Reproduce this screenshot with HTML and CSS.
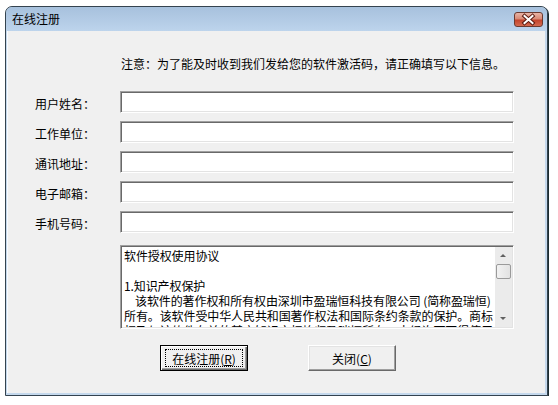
FILE: index.html
```html
<!DOCTYPE html>
<html lang="zh-CN">
<head>
<meta charset="utf-8">
<title>在线注册</title>
<link rel="stylesheet" href="styles.css">
</head>
<body>
<div class="window">
  <div class="titlebar">
    <span class="title">在线注册</span>
    <div class="close-btn">
      <svg width="29" height="15" viewBox="0 0 29 15">
        <path d="M10.5 4 L18.5 11 M18.5 4 L10.5 11" stroke="#5a1a10" stroke-width="4" stroke-linecap="square"/>
        <path d="M10.5 4 L18.5 11 M18.5 4 L10.5 11" stroke="#ffffff" stroke-width="2" stroke-linecap="square"/>
      </svg>
    </div>
  </div>
  <div class="client">
    <p class="notice">注意：为了能及时收到我们发给您的软件激活码，请正确填写以下信息。</p>
    <div class="form">
      <label class="label">用户姓名：</label><div class="field"></div>
      <label class="label">工作单位：</label><div class="field"></div>
      <label class="label">通讯地址：</label><div class="field"></div>
      <label class="label">电子邮箱：</label><div class="field"></div>
      <label class="label">手机号码：</label><div class="field"></div>
    </div>
    <div class="agreement">
      <div class="agreement-text">
        <div class="line">软件授权使用协议</div>
        <div class="line">&nbsp;</div>
        <div class="line">1.知识产权保护</div>
        <div class="line indent">该软件的著作权和所有权由深圳市盈瑞恒科技有限公司 (简称盈瑞恒)</div>
        <div class="line">所有。该软件受中华人民共和国著作权法和国际条约条款的保护。商标</div>
        <div class="line">权及与该软件有关的其它知识产权均归盈瑞恒所有，未经许可不得使用。</div>
      </div>
      <div class="scrollbar">
        <div class="arrow arrow-up"></div>
        <div class="thumb"></div>
        <div class="track"></div>
        <div class="arrow arrow-down"></div>
      </div>
    </div>
    <div class="buttons">
      <button class="btn btn-default"><span class="focus">在线注册(<u>R</u>)</span></button>
      <button class="btn">关闭(<u>C</u>)</button>
    </div>
  </div>
</div>
</body>
</html>
```
FILE: styles.css
```css
* { box-sizing: border-box; }

body {
  margin: 0;
  background: #ffffff;
  font-family: "Noto Sans CJK SC", "Noto Sans", sans-serif;
  font-size: 12px;
  color: #000;
}

.window {
  margin: 6px 0 0 5px;
  width: 543px;
  height: 390px;
  border: 1px solid #34434f;
  border-radius: 7px 7px 0 0;
  box-shadow: 1px 1px 0 #1c2c30;
  background: #c4d8ec;
  display: flex;
  flex-direction: column;
  padding: 0 2px 2px 1px;
  overflow: hidden;
}

.titlebar {
  height: 24px;
  margin: 0 -2px 0 -1px;
  padding: 0 4px 0 6px;
  background: linear-gradient(#a7c1dd, #b4cce6 60%, #bdd4ec);
  border-radius: 6px 6px 0 0;
  display: flex;
  align-items: flex-start;
  justify-content: space-between;
}

.title {
  line-height: 24px;
  font-size: 12px;
  color: #000;
}

.close-btn {
  margin-top: 5px;
  width: 29px;
  height: 15px;
  border: 1px solid #6b3a30;
  border-radius: 3px;
  background: linear-gradient(#e8b4a6, #d98a76 45%, #c4442c 55%, #d46a50);
  display: flex;
}

.close-btn svg { display: block; margin: -1px; }

.client {
  flex: 1;
  background: #f0f0f0;
  border-left: 1px solid #f8fbff;
  display: flex;
  flex-direction: column;
}

.notice {
  margin: 25px 0 0 113px;
  line-height: 16px;
  white-space: nowrap;
}

.form {
  margin: 19px 0 0 27px;
  display: grid;
  grid-template-columns: 85px 394px;
  grid-auto-rows: 22px;
  row-gap: 8px;
}

.label {
  display: flex;
  align-items: center;
  padding-top: 2px;
}

.field {
  background: #fff;
  border-top: 1px solid #a0a0a0;
  border-left: 1px solid #a0a0a0;
  border-right: 1px solid #fff;
  border-bottom: 1px solid #fff;
  box-shadow: inset 1px 1px 0 #696969, inset -1px -1px 0 #e3e3e3;
}

.agreement {
  margin: 12px 0 0 112px;
  width: 394px;
  height: 84px;
  display: flex;
  background: #fff;
  border-top: 1px solid #a0a0a0;
  border-left: 1px solid #a0a0a0;
  border-right: 1px solid #fff;
  border-bottom: 1px solid #fff;
  box-shadow: inset 1px 1px 0 #696969, inset -1px -1px 0 #e3e3e3;
  padding: 2px 1px 1px 2px;
}

.agreement-text {
  flex: 1;
  overflow: hidden;
  padding: 0 0 0 1px;
}

.line {
  height: 15px;
  line-height: 15px;
  white-space: nowrap;
  overflow: hidden;
  letter-spacing: -0.1px;
}

.indent { padding-left: 11px; }

.scrollbar {
  width: 17px;
  margin-top: -1px;
  display: flex;
  flex-direction: column;
  background: #ebebeb;
}

.arrow {
  height: 17px;
  position: relative;
}

.arrow::after {
  content: "";
  position: absolute;
  left: 5px;
  width: 0;
  height: 0;
  border-left: 3px solid transparent;
  border-right: 3px solid transparent;
}

.arrow-up::after {
  top: 7px;
  border-bottom: 3px solid #606060;
}

.arrow-down::after {
  top: 7px;
  border-top: 3px solid #606060;
}

.thumb {
  height: 15px;
  margin: 0 1px;
  border: 1px solid #9a9a9a;
  border-radius: 2px;
  background: linear-gradient(90deg, #f2f2f2, #e2e2e2);
}

.track { flex: 1; }

.buttons {
  margin: 16px 0 0 152px;
  display: flex;
  gap: 60px;
}

.btn {
  width: 88px;
  height: 26px;
  padding: 0;
  font-family: inherit;
  font-size: 12px;
  color: #000;
  background: #f0f0f0;
  border-top: 1px solid #fff;
  border-left: 1px solid #fff;
  border-right: 1px solid #696969;
  border-bottom: 1px solid #696969;
  box-shadow: inset -1px -1px 0 #a0a0a0, inset 1px 1px 0 #e3e3e3;
  display: flex;
  align-items: center;
  justify-content: center;
}

.btn-default {
  border: 1px solid #000;
  box-shadow: inset 1px 1px 0 #fff, inset -1px -1px 0 #696969, inset -2px -2px 0 #a0a0a0;
}

.focus {
  width: 78px;
  height: 18px;
  border: 1px dotted #000;
  display: flex;
  align-items: center;
  justify-content: center;
}

u { text-decoration: underline; }
```
